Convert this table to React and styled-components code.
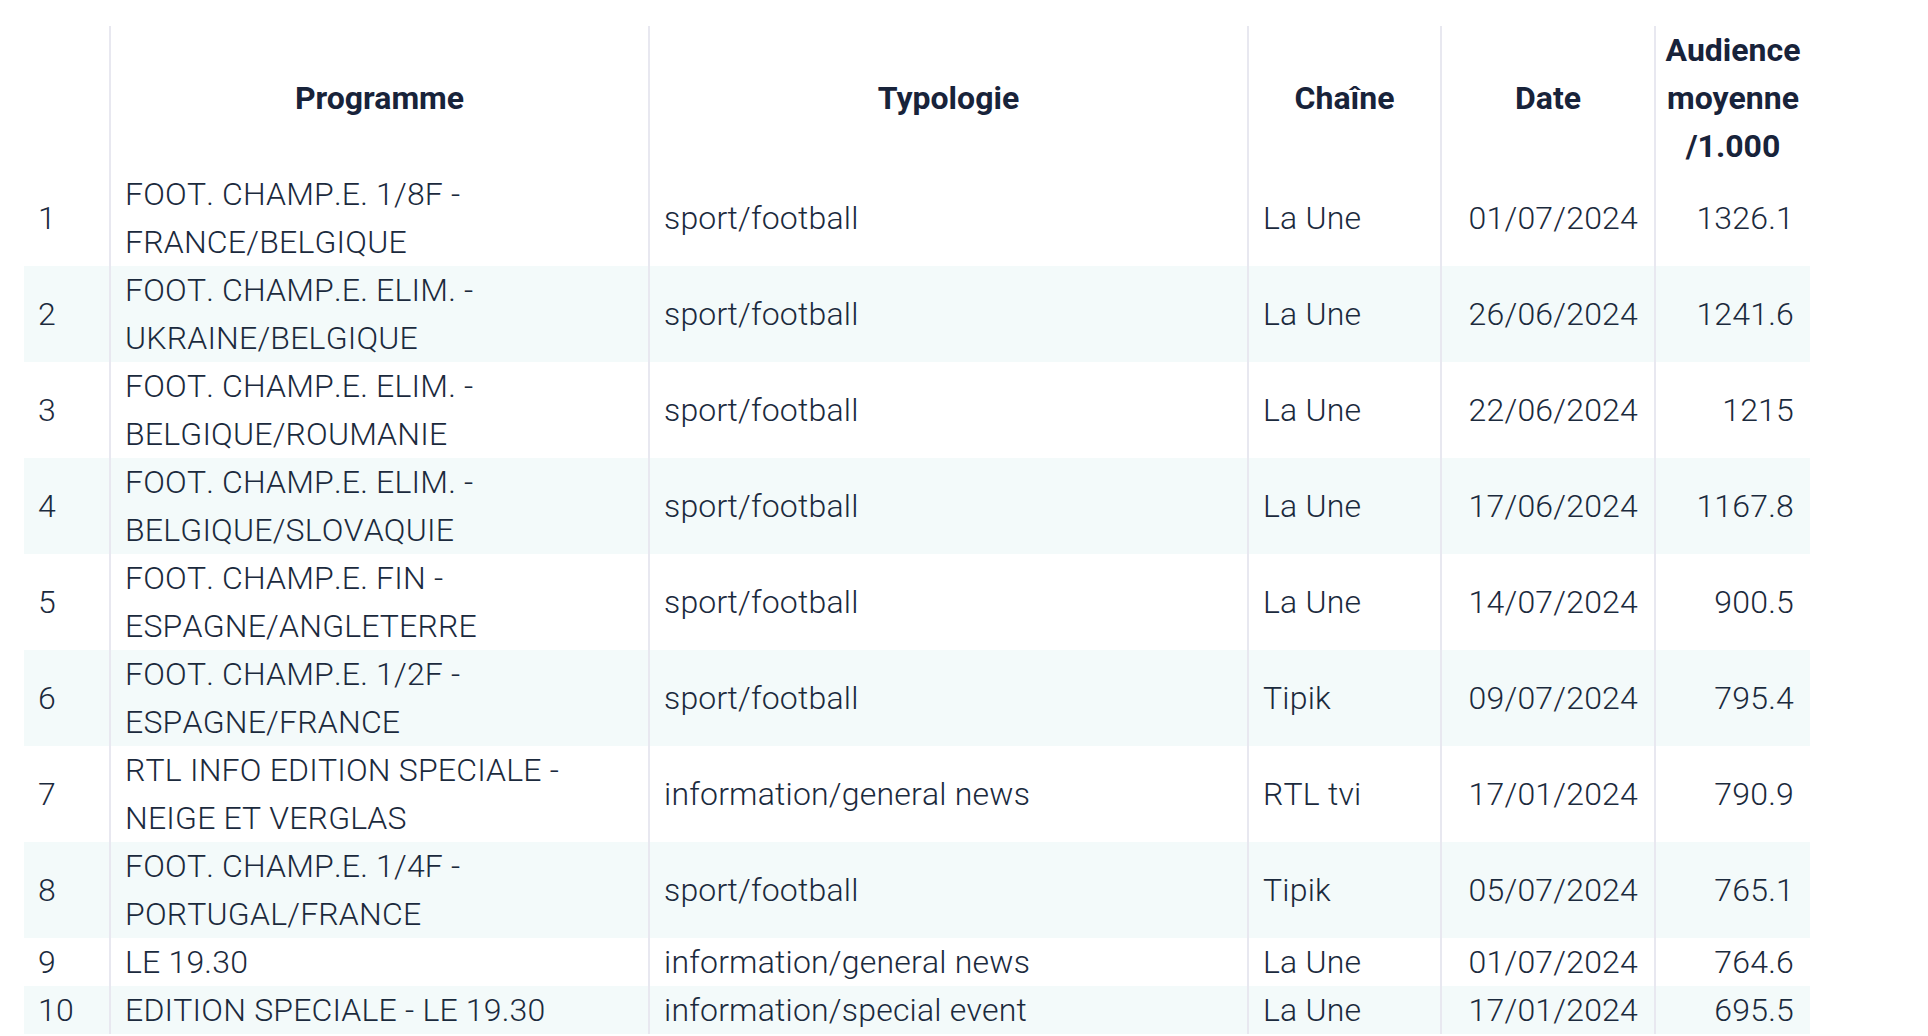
import styled, { createGlobalStyle } from 'styled-components'

const GlobalStyle = createGlobalStyle`
  body {
    margin: 0;
    background: #ffffff;
    font-family: Roboto, "Liberation Sans", sans-serif;
    color: #1b2a3d;
  }
`

const Wrapper = styled.div`
  padding: 26px 0 0 24px;
`

const Table = styled.table`
  width: 1786px;
  table-layout: fixed;
  border-collapse: collapse;
  font-size: 32px;
  line-height: 48px;
`

const HeadCell = styled.th`
  font-weight: 700;
  color: #18233a;
  text-align: center;
  vertical-align: middle;
  padding: 0 8px;
  border-left: ${({ first }) => (first ? 'none' : '2px solid #e8e8f0')};
`

const Row = styled.tr`
  background: ${({ striped }) => (striped ? '#f3fafa' : '#ffffff')};
`

const Cell = styled.td`
  font-weight: 300;
  font-kerning: none;
  letter-spacing: 0.2px;
  vertical-align: middle;
  padding: 0 16px 0 14px;
  text-align: ${({ align }) => align || 'left'};
  border-left: ${({ first }) => (first ? 'none' : '2px solid #e8e8f0')};
`

const columns = [86, 539, 599, 193, 214, 155]

const rows = [
  ['FOOT. CHAMP.E. 1/8F - FRANCE/BELGIQUE', 'sport/football', 'La Une', '01/07/2024', '1326.1'],
  ['FOOT. CHAMP.E. ELIM. - UKRAINE/BELGIQUE', 'sport/football', 'La Une', '26/06/2024', '1241.6'],
  ['FOOT. CHAMP.E. ELIM. - BELGIQUE/ROUMANIE', 'sport/football', 'La Une', '22/06/2024', '1215'],
  ['FOOT. CHAMP.E. ELIM. - BELGIQUE/SLOVAQUIE', 'sport/football', 'La Une', '17/06/2024', '1167.8'],
  ['FOOT. CHAMP.E. FIN - ESPAGNE/ANGLETERRE', 'sport/football', 'La Une', '14/07/2024', '900.5'],
  ['FOOT. CHAMP.E. 1/2F - ESPAGNE/FRANCE', 'sport/football', 'Tipik', '09/07/2024', '795.4'],
  ['RTL INFO EDITION SPECIALE - NEIGE ET VERGLAS', 'information/general news', 'RTL tvi', '17/01/2024', '790.9'],
  ['FOOT. CHAMP.E. 1/4F - PORTUGAL/FRANCE', 'sport/football', 'Tipik', '05/07/2024', '765.1'],
  ['LE 19.30', 'information/general news', 'La Une', '01/07/2024', '764.6'],
  ['EDITION SPECIALE - LE 19.30', 'information/special event', 'La Une', '17/01/2024', '695.5'],
]

export default function App() {
  return (
    <Wrapper>
      <GlobalStyle />
      <Table>
        <colgroup>
          {columns.map((w, i) => <col key={i} style={{ width: w }} />)}
        </colgroup>
        <thead>
          <tr>
            <HeadCell first></HeadCell>
            <HeadCell>Programme</HeadCell>
            <HeadCell>Typologie</HeadCell>
            <HeadCell>Chaîne</HeadCell>
            <HeadCell>Date</HeadCell>
            <HeadCell>Audience moyenne /1.000</HeadCell>
          </tr>
        </thead>
        <tbody>
          {rows.map((r, i) => (
            <Row key={i} striped={i % 2 === 1}>
              <Cell first>{i + 1}</Cell>
              <Cell>{r[0]}</Cell>
              <Cell>{r[1]}</Cell>
              <Cell>{r[2]}</Cell>
              <Cell align="right">{r[3]}</Cell>
              <Cell align="right">{r[4]}</Cell>
            </Row>
          ))}
        </tbody>
      </Table>
    </Wrapper>
  )
}
